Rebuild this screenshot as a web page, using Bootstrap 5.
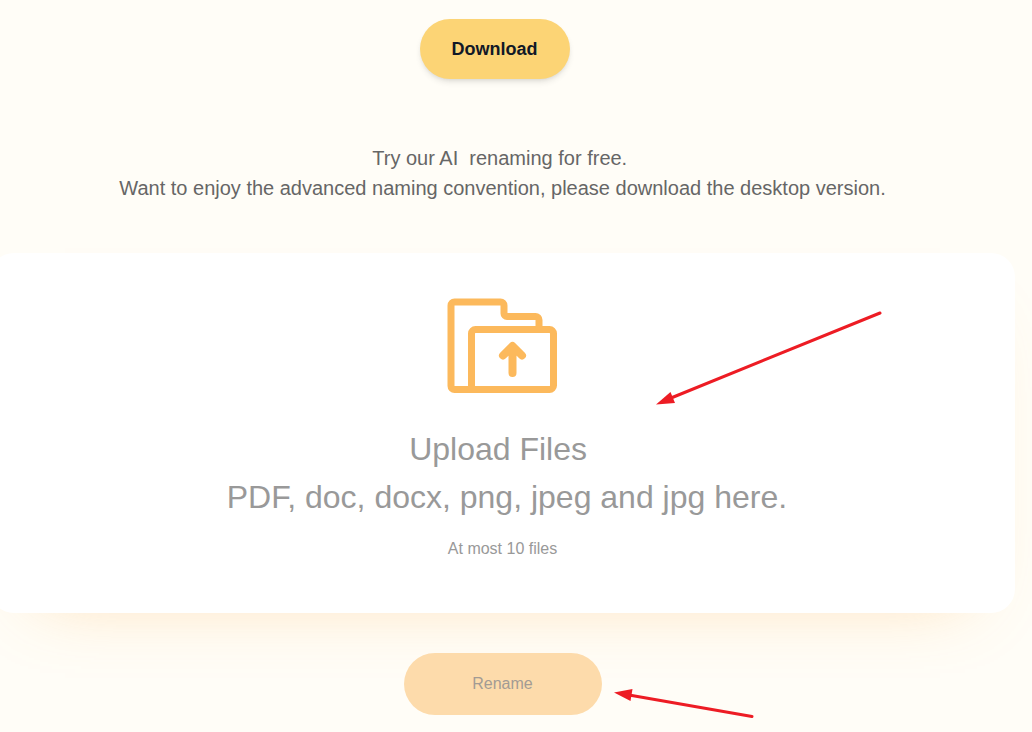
<!DOCTYPE html>
<html lang="en">
<head>
<meta charset="utf-8">
<meta name="viewport" content="width=device-width, initial-scale=1">
<title>AI Rename</title>
<link href="https://cdn.jsdelivr.net/npm/bootstrap@5.3.0/dist/css/bootstrap.min.css" rel="stylesheet">
<style>
  body { background: #fffdf7; color: #666; font-family: "Liberation Sans", Arial, sans-serif; overflow-x: hidden; }
  .page { margin: 0 17px 0 -10px; padding-top: 19px; }
  .btn-download { --bs-btn-bg: #fcd475; --bs-btn-color: #111827; --bs-btn-hover-bg: #f9ca5c; --bs-btn-border-width: 0;
    width: 150px; height: 60px; font-size: 18px; box-shadow: 0 4px 6px -1px rgba(0,0,0,.1), 0 2px 4px -2px rgba(0,0,0,.1); }
  .intro { margin-top: 64px; margin-bottom: 50px; font-size: 20px; line-height: 30px; }
  .upload-box { min-height: 360px; padding-top: 45px; border-radius: 24px; color: #999; cursor: pointer;
    box-shadow: 0 30px 70px -50px rgba(252,170,70,.45); }
  .upload-title { margin-top: 30px; font-size: 32px; line-height: 48px; }
  .upload-hint { margin-top: 16px; font-size: 16px; line-height: 24px; }
  .btn-rename { --bs-btn-disabled-bg: #fddbab; --bs-btn-disabled-color: #a39b94; --bs-btn-disabled-opacity: 1; --bs-btn-border-width: 0;
    width: 198px; height: 62px; margin-top: 40px; margin-bottom: 17px; font-size: 16px; }
  .pointer-upload { right: 133px; top: 57px; pointer-events: none; }
  .pointer-rename { left: 100%; bottom: 12px; margin-left: 10px; pointer-events: none; }
</style>
</head>
<body>
<main class="page d-flex flex-column text-center">
  <div class="pe-3"><button type="button" class="btn btn-download rounded-pill fw-bold">Download</button></div>
  <p class="intro">Try our AI&nbsp; renaming for free.&nbsp;<br>Want to enjoy the advanced naming convention, please download the desktop version.</p>

  <label class="upload-box bg-white position-relative d-flex flex-column align-items-center" for="files">
    <input class="visually-hidden" type="file" id="files" multiple accept=".pdf,.doc,.docx,.png,.jpeg,.jpg">
    <svg width="111" height="97" viewBox="0 0 111 97" fill="none" stroke="#fcb95c" stroke-width="7" stroke-linejoin="round" aria-hidden="true">
      <path d="M24.500 91V35.500a4 4 0 0 1 4-4h74a4 4 0 0 1 4 4v52a4 4 0 0 1-4 4H7.500a3.500 3.500 0 0 1-3.500-3.500V7.500a3.500 3.500 0 0 1 3.500-3.500h46a3.500 3.500 0 0 1 3.500 3.500v8a3 3 0 0 0 3 3h28.500a3.500 3.500 0 0 1 3.500 3.500v9"/>
      <path stroke-width="8" stroke-linecap="round" d="M65.500 75V49M56 57.500l9.500-9.500 9.500 9.500"/>
    </svg>
    <span class="upload-title">Upload Files&nbsp;<br>&nbsp;PDF, doc, docx, png, jpeg and jpg here.</span>
    <span class="upload-hint">At most 10 files</span>
    <svg class="pointer-upload position-absolute" width="226" height="96" viewBox="0 0 226 96" fill="#ed1c24" aria-hidden="true">
      <path d="M224 3L15 88" stroke="#ed1c24" stroke-width="3" stroke-linecap="round"/>
      <path d="M0 94.500l14.500-12.500 4.500 11z"/>
    </svg>
  </label>

  <div class="position-relative align-self-center">
    <button type="button" class="btn btn-rename rounded-pill" disabled>Rename</button>
    <svg class="pointer-rename position-absolute" width="144" height="32" viewBox="0 0 144 32" fill="#ed1c24" aria-hidden="true">
      <path d="M140 28.500L17 7" stroke="#ed1c24" stroke-width="3" stroke-linecap="round"/>
      <path d="M2 4.500l18.500-3.500-2 12z"/>
    </svg>
  </div>
</main>
<script src="https://cdn.jsdelivr.net/npm/bootstrap@5.3.0/dist/js/bootstrap.bundle.min.js"></script>
</body>
</html>
